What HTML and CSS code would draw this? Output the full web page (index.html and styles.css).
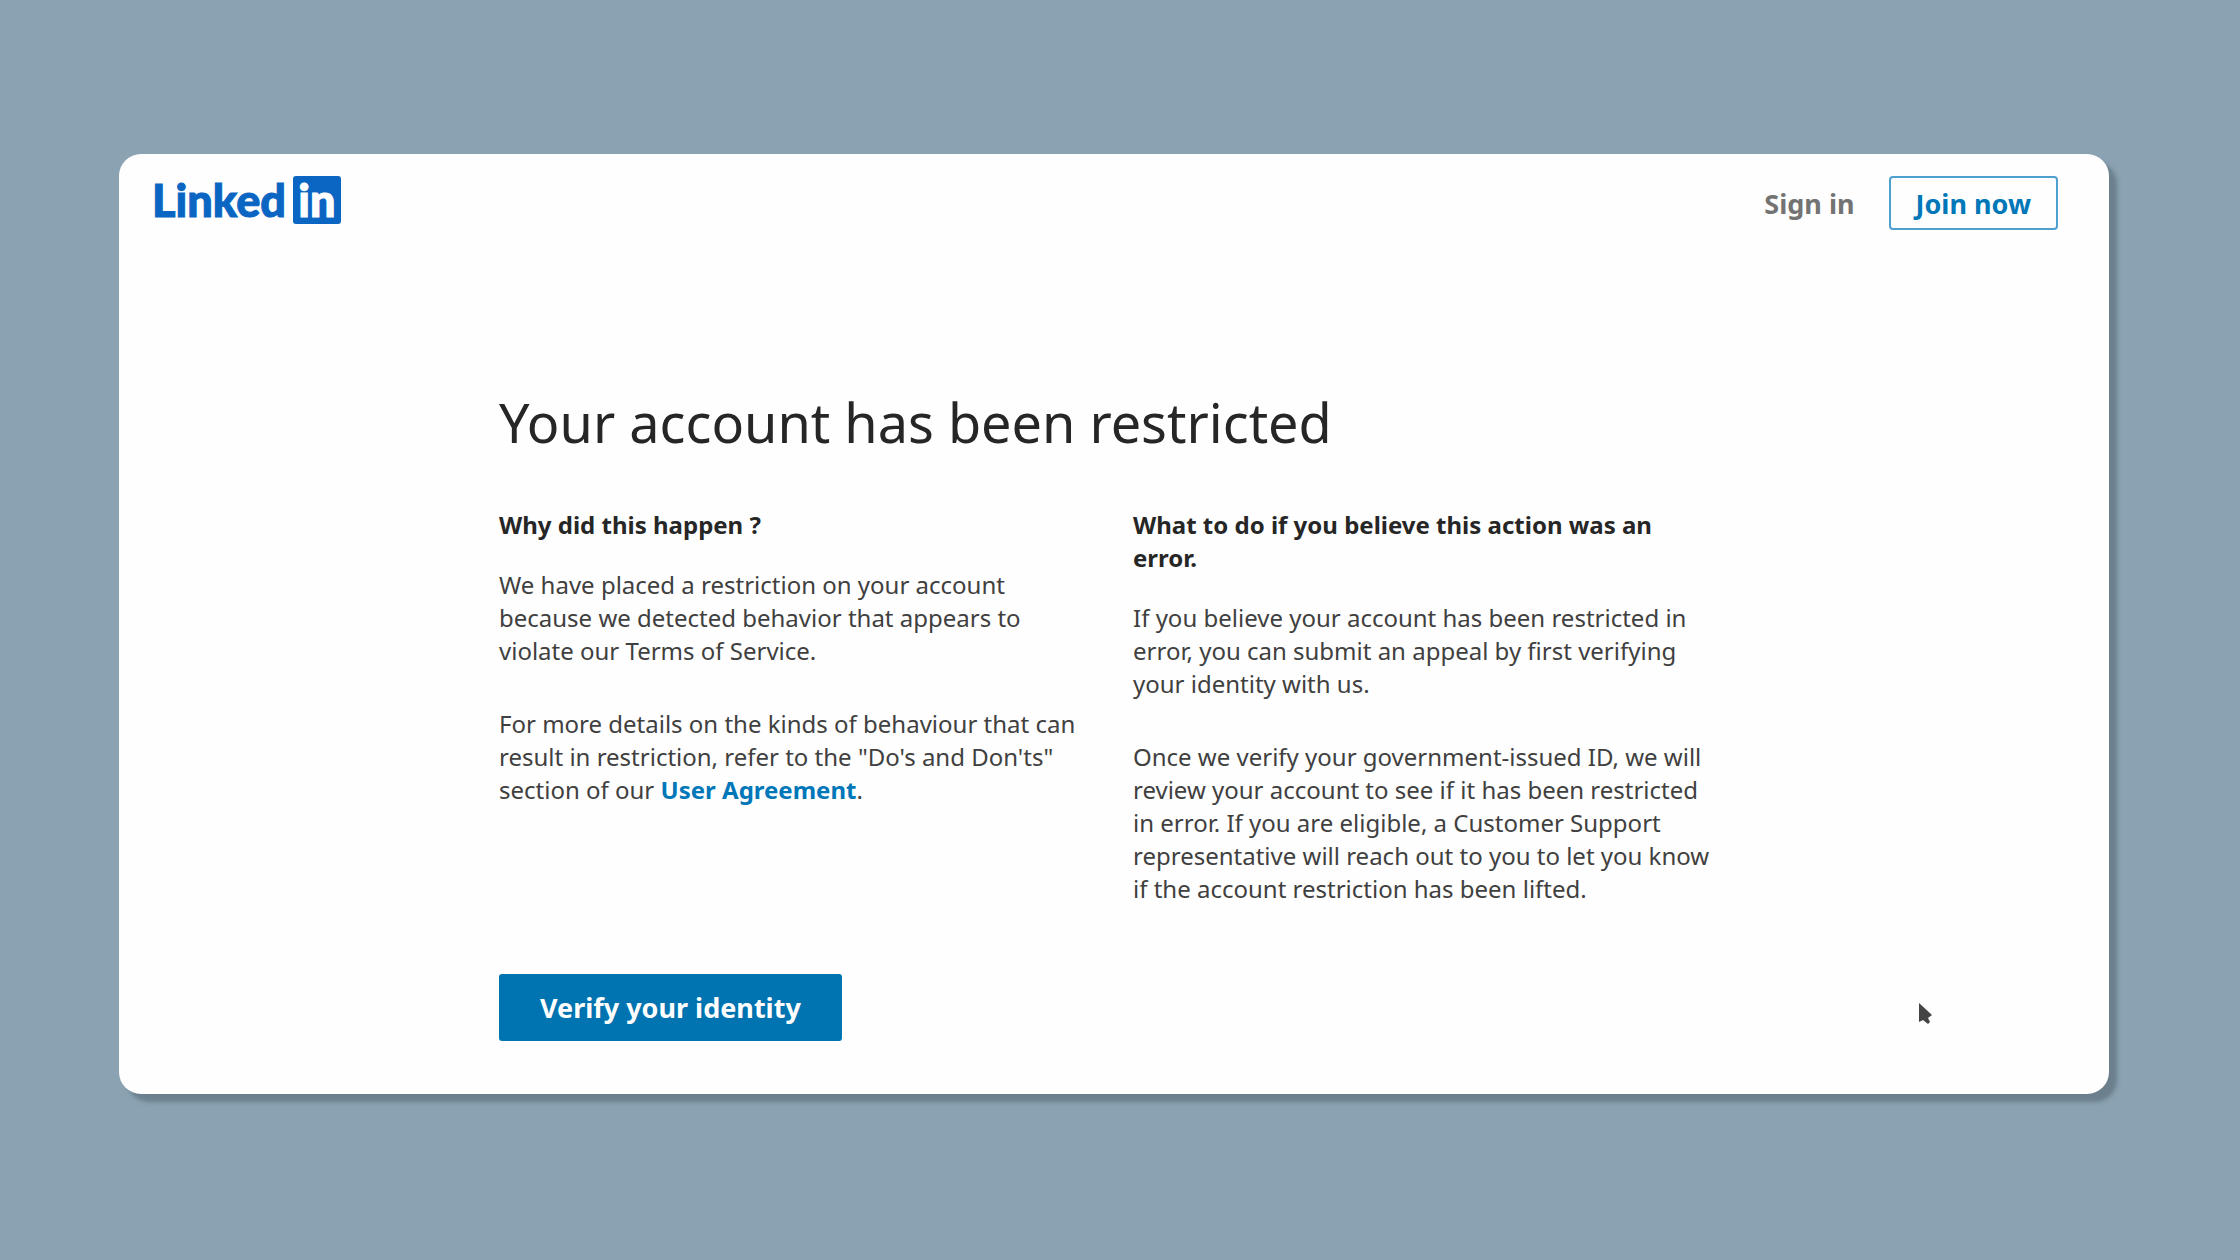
FILE: index.html
```html
<!DOCTYPE html>
<html lang="en">
<head>
<meta charset="utf-8">
<meta name="viewport" content="width=device-width, initial-scale=1">
<title>Your account has been restricted</title>
<link rel="stylesheet" href="styles.css">
</head>
<body>
<div class="card">
  <header class="topbar">
    <a class="logo" href="#" aria-label="LinkedIn"><span class="logo-word">Linked</span><span class="logo-box">in</span></a>
    <nav class="actions">
      <a class="sign-in" href="#">Sign in</a>
      <button class="join" type="button">Join now</button>
    </nav>
  </header>
  <main class="content">
    <h1>Your account has been restricted</h1>
    <div class="columns">
      <section>
        <h2>Why did this happen ?</h2>
        <p>We have placed a restriction on your account because we detected behavior that appears to violate our Terms of Service.</p>
        <p>For more details on the kinds of behaviour that can result in restriction, refer to the "Do's and Don'ts" section of our <a href="#">User Agreement</a>.</p>
      </section>
      <section>
        <h2>What to do if you believe this action was an error.</h2>
        <p>If you believe your account has been restricted in error, you can submit an appeal by first verifying your identity with us.</p>
        <p>Once we verify your government-issued ID, we will review your account to see if it has been restricted in error. If you are eligible, a Customer Support representative will reach out to you to let you know if the account restriction has been lifted.</p>
      </section>
    </div>
    <button class="verify" type="button">Verify your identity</button>
  </main>
  <svg class="pointer" width="16" height="24" viewBox="0 0 16 24" aria-hidden="true">
    <path d="M2 1V20L6 18L11 22L13 20L11 16L15 13Z" fill="#444"/>
  </svg>
</div>
</body>
</html>
```
FILE: styles.css
```css
* {
  box-sizing: border-box;
}

body {
  margin: 0;
  min-height: 100vh;
  padding: 154px 131px 166px 119px;
  background: #8aa2b2;
  color: #262626;
  font: 24px/33px "Noto Sans", sans-serif;
}

.card {
  position: relative;
  background: #fefefe;
  border-radius: 22px;
  box-shadow: 8px 8px 4px #6b7f8d;
  padding-bottom: 53px;
}

.topbar {
  display: flex;
  justify-content: space-between;
  align-items: flex-start;
  padding: 22px 51px 0 33px;
}

.logo {
  display: flex;
  gap: 7px;
  color: #0a66c2;
  text-decoration: none;
  font: 900 45px/48px Lato, sans-serif;
  -webkit-text-stroke: 1px currentColor;
}

.logo-box {
  width: 48px;
  height: 48px;
  border-radius: 3px;
  background: #0a66c2;
  color: #fefefe;
  text-align: center;
}

.actions {
  display: flex;
  align-items: center;
  gap: 34px;
}

.sign-in {
  color: #737373;
  font-size: 27px;
  font-weight: 700;
  text-decoration: none;
}

.join {
  height: 54px;
  padding: 0 25px;
  border: 2px solid #4f9fcf;
  border-radius: 4px;
  background: transparent;
  color: #0077b8;
  font: 700 27px/33px "Noto Sans", sans-serif;
}

.content {
  max-width: 1230px;
  margin: 0 auto;
  padding-top: 154px;
}

h1 {
  margin: 0 0 48px;
  font-size: 54px;
  line-height: 76px;
  font-weight: 400;
}

.columns {
  display: grid;
  grid-template-columns: 1fr 1fr;
  column-gap: 54px;
  padding-right: 16px;
}

h2 {
  margin: 0 0 27px;
  font-size: 24px;
  line-height: 33px;
  font-weight: 700;
}

p {
  margin: 0 0 40px;
  color: #404040;
}

p a {
  color: #0077b8;
  font-weight: 700;
  text-decoration: none;
}

.verify {
  display: block;
  margin-top: 29px;
  height: 67px;
  padding: 0 41px;
  border: 0;
  border-radius: 3px;
  background: #0073b1;
  color: #fefefe;
  font: 700 27px/33px "Noto Sans", sans-serif;
}

.pointer {
  position: absolute;
  right: 176px;
  bottom: 68px;
}
```
